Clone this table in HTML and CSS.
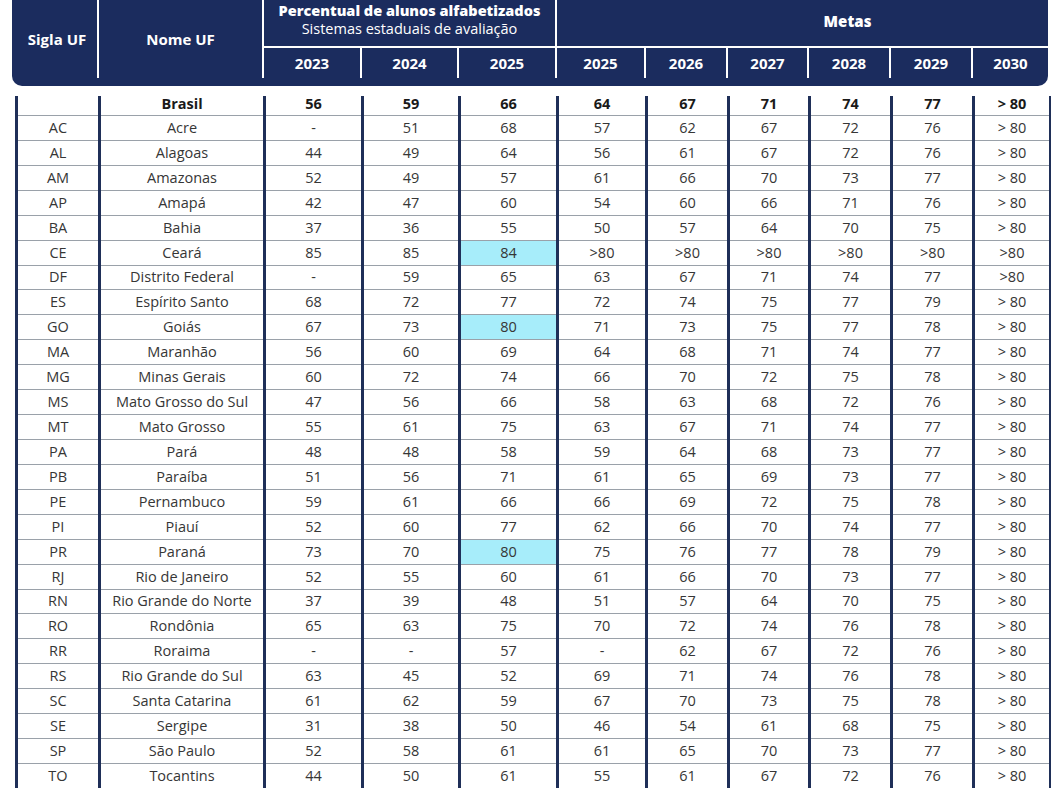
FILE: index.html
```html
<!DOCTYPE html>
<html lang="pt-BR">
<head>
<meta charset="utf-8">
<title>Alfabetização</title>
<link rel="stylesheet" href="styles.css">
</head>
<body>
<div class="page">
  <div class="head">
    <div class="hc sigla">Sigla UF</div>
    <div class="hc nome">Nome UF</div>
    <div class="hc grp perc"><b>Percentual de alunos alfabetizados</b><span>Sistemas estaduais de avaliação</span></div>
    <div class="hc grp metas"><b>Metas</b></div>
    <div class="hc yr first">2023</div>
    <div class="hc yr">2024</div>
    <div class="hc yr">2025</div>
    <div class="hc yr">2025</div>
    <div class="hc yr">2026</div>
    <div class="hc yr">2027</div>
    <div class="hc yr">2028</div>
    <div class="hc yr">2029</div>
    <div class="hc yr">2030</div>
  </div>
  <table class="data">
    <colgroup>
      <col class="c-sig"><col class="c-nome"><col class="c-98"><col class="c-97"><col class="c-98"><col class="c-89"><col class="c-82"><col class="c-81"><col class="c-82"><col class="c-82"><col class="c-77">
    </colgroup>
    <tbody>
      <tr class="br"><td></td><td>Brasil</td><td>56</td><td>59</td><td>66</td><td>64</td><td>67</td><td>71</td><td>74</td><td>77</td><td>&gt; 80</td></tr>
      <tr><td>AC</td><td>Acre</td><td>-</td><td>51</td><td>68</td><td>57</td><td>62</td><td>67</td><td>72</td><td>76</td><td>&gt; 80</td></tr>
      <tr><td>AL</td><td>Alagoas</td><td>44</td><td>49</td><td>64</td><td>56</td><td>61</td><td>67</td><td>72</td><td>76</td><td>&gt; 80</td></tr>
      <tr><td>AM</td><td>Amazonas</td><td>52</td><td>49</td><td>57</td><td>61</td><td>66</td><td>70</td><td>73</td><td>77</td><td>&gt; 80</td></tr>
      <tr><td>AP</td><td>Amapá</td><td>42</td><td>47</td><td>60</td><td>54</td><td>60</td><td>66</td><td>71</td><td>76</td><td>&gt; 80</td></tr>
      <tr><td>BA</td><td>Bahia</td><td>37</td><td>36</td><td>55</td><td>50</td><td>57</td><td>64</td><td>70</td><td>75</td><td>&gt; 80</td></tr>
      <tr><td>CE</td><td>Ceará</td><td>85</td><td>85</td><td class="hl">84</td><td>&gt;80</td><td>&gt;80</td><td>&gt;80</td><td>&gt;80</td><td>&gt;80</td><td>&gt;80</td></tr>
      <tr><td>DF</td><td>Distrito Federal</td><td>-</td><td>59</td><td>65</td><td>63</td><td>67</td><td>71</td><td>74</td><td>77</td><td>&gt;80</td></tr>
      <tr><td>ES</td><td>Espírito Santo</td><td>68</td><td>72</td><td>77</td><td>72</td><td>74</td><td>75</td><td>77</td><td>79</td><td>&gt; 80</td></tr>
      <tr><td>GO</td><td>Goiás</td><td>67</td><td>73</td><td class="hl">80</td><td>71</td><td>73</td><td>75</td><td>77</td><td>78</td><td>&gt; 80</td></tr>
      <tr><td>MA</td><td>Maranhão</td><td>56</td><td>60</td><td>69</td><td>64</td><td>68</td><td>71</td><td>74</td><td>77</td><td>&gt; 80</td></tr>
      <tr><td>MG</td><td>Minas Gerais</td><td>60</td><td>72</td><td>74</td><td>66</td><td>70</td><td>72</td><td>75</td><td>78</td><td>&gt; 80</td></tr>
      <tr><td>MS</td><td>Mato Grosso do Sul</td><td>47</td><td>56</td><td>66</td><td>58</td><td>63</td><td>68</td><td>72</td><td>76</td><td>&gt; 80</td></tr>
      <tr><td>MT</td><td>Mato Grosso</td><td>55</td><td>61</td><td>75</td><td>63</td><td>67</td><td>71</td><td>74</td><td>77</td><td>&gt; 80</td></tr>
      <tr><td>PA</td><td>Pará</td><td>48</td><td>48</td><td>58</td><td>59</td><td>64</td><td>68</td><td>73</td><td>77</td><td>&gt; 80</td></tr>
      <tr><td>PB</td><td>Paraíba</td><td>51</td><td>56</td><td>71</td><td>61</td><td>65</td><td>69</td><td>73</td><td>77</td><td>&gt; 80</td></tr>
      <tr><td>PE</td><td>Pernambuco</td><td>59</td><td>61</td><td>66</td><td>66</td><td>69</td><td>72</td><td>75</td><td>78</td><td>&gt; 80</td></tr>
      <tr><td>PI</td><td>Piauí</td><td>52</td><td>60</td><td>77</td><td>62</td><td>66</td><td>70</td><td>74</td><td>77</td><td>&gt; 80</td></tr>
      <tr><td>PR</td><td>Paraná</td><td>73</td><td>70</td><td class="hl">80</td><td>75</td><td>76</td><td>77</td><td>78</td><td>79</td><td>&gt; 80</td></tr>
      <tr><td>RJ</td><td>Rio de Janeiro</td><td>52</td><td>55</td><td>60</td><td>61</td><td>66</td><td>70</td><td>73</td><td>77</td><td>&gt; 80</td></tr>
      <tr><td>RN</td><td>Rio Grande do Norte</td><td>37</td><td>39</td><td>48</td><td>51</td><td>57</td><td>64</td><td>70</td><td>75</td><td>&gt; 80</td></tr>
      <tr><td>RO</td><td>Rondônia</td><td>65</td><td>63</td><td>75</td><td>70</td><td>72</td><td>74</td><td>76</td><td>78</td><td>&gt; 80</td></tr>
      <tr><td>RR</td><td>Roraima</td><td>-</td><td>-</td><td>57</td><td>-</td><td>62</td><td>67</td><td>72</td><td>76</td><td>&gt; 80</td></tr>
      <tr><td>RS</td><td>Rio Grande do Sul</td><td>63</td><td>45</td><td>52</td><td>69</td><td>71</td><td>74</td><td>76</td><td>78</td><td>&gt; 80</td></tr>
      <tr><td>SC</td><td>Santa Catarina</td><td>61</td><td>62</td><td>59</td><td>67</td><td>70</td><td>73</td><td>75</td><td>78</td><td>&gt; 80</td></tr>
      <tr><td>SE</td><td>Sergipe</td><td>31</td><td>38</td><td>50</td><td>46</td><td>54</td><td>61</td><td>68</td><td>75</td><td>&gt; 80</td></tr>
      <tr><td>SP</td><td>São Paulo</td><td>52</td><td>58</td><td>61</td><td>61</td><td>65</td><td>70</td><td>73</td><td>77</td><td>&gt; 80</td></tr>
      <tr class="last"><td>TO</td><td>Tocantins</td><td>44</td><td>50</td><td>61</td><td>55</td><td>61</td><td>67</td><td>72</td><td>76</td><td>&gt; 80</td></tr>
    </tbody>
  </table>
</div>
</body>
</html>
```
FILE: styles.css
```css
html, body {
  margin: 0;
  padding: 0;
  background: #ffffff;
}
body {
  font-family: "Open Sans", "Liberation Sans", sans-serif;
  overflow: hidden;
}
.page {
  width: 1051px;
  height: 790px;
  overflow: hidden;
}
.head {
  margin-left: 12px;
  width: 1036px;
  height: 86px;
  box-sizing: border-box;
  padding-bottom: 8px;
  background: #1b2c5e;
  border-radius: 0 0 10px 10px;
  display: grid;
  grid-template-columns: 85px 165px 98px 97px 98px 89px 82px 81px 82px 82px 77px;
  grid-template-rows: 46px 30px;
  row-gap: 2px;
  color: #ffffff;
  font-size: 15px;
  font-weight: 700;
}
.hc {
  display: flex;
  align-items: center;
  justify-content: center;
  text-align: center;
  box-sizing: border-box;
}
.sigla {
  grid-column: 1;
  grid-row: 1 / 3;
  padding-left: 5px;
}
.nome {
  grid-column: 2;
  grid-row: 1 / 3;
  border-left: 2px solid #ffffff;
}
.grp {
  grid-row: 1;
  border-left: 2px solid #ffffff;
  position: relative;
}
.grp::after {
  content: "";
  position: absolute;
  left: -2px;
  right: 0;
  bottom: -2px;
  height: 2px;
  background: #ffffff;
}
.perc {
  grid-column: 3 / 6;
  flex-direction: column;
  line-height: 18px;
  padding-bottom: 6px;
  font-size: 14.5px;
}
.perc span {
  font-weight: 400;
}
.metas {
  grid-column: 6 / 12;
  padding-left: 90px;
  padding-bottom: 4px;
}
.yr {
  grid-row: 2;
  border-left: 2px solid #ffffff;
}
.yr.first {
  grid-column: 3;
}
.data {
  margin-top: 10px;
  margin-left: 15px;
  width: 1034px;
  border-collapse: collapse;
  table-layout: fixed;
  font-size: 14.5px;
  color: #363636;
}
.c-sig { width: 83px; }
.c-nome { width: 165px; }
.c-98 { width: 98px; }
.c-97 { width: 97px; }
.c-89 { width: 89px; }
.c-82 { width: 82px; }
.c-81 { width: 81px; }
.c-77 { width: 77px; }
.data td {
  height: 23.93px;
  padding: 0;
  text-align: center;
  vertical-align: middle;
  line-height: 18px;
  border-left: 3px solid #1f2f58;
  border-right: 3px solid #1f2f58;
  border-bottom: 1px solid #9aa1a9;
  white-space: nowrap;
}
.data tr.br td {
  height: 19px;
  font-weight: 700;
  color: #1a1a1a;
  vertical-align: top;
  line-height: 15px;
}
.data tr.last td {
  border-bottom: 0;
}
.data td.hl {
  background: #a7edfa;
}
```
